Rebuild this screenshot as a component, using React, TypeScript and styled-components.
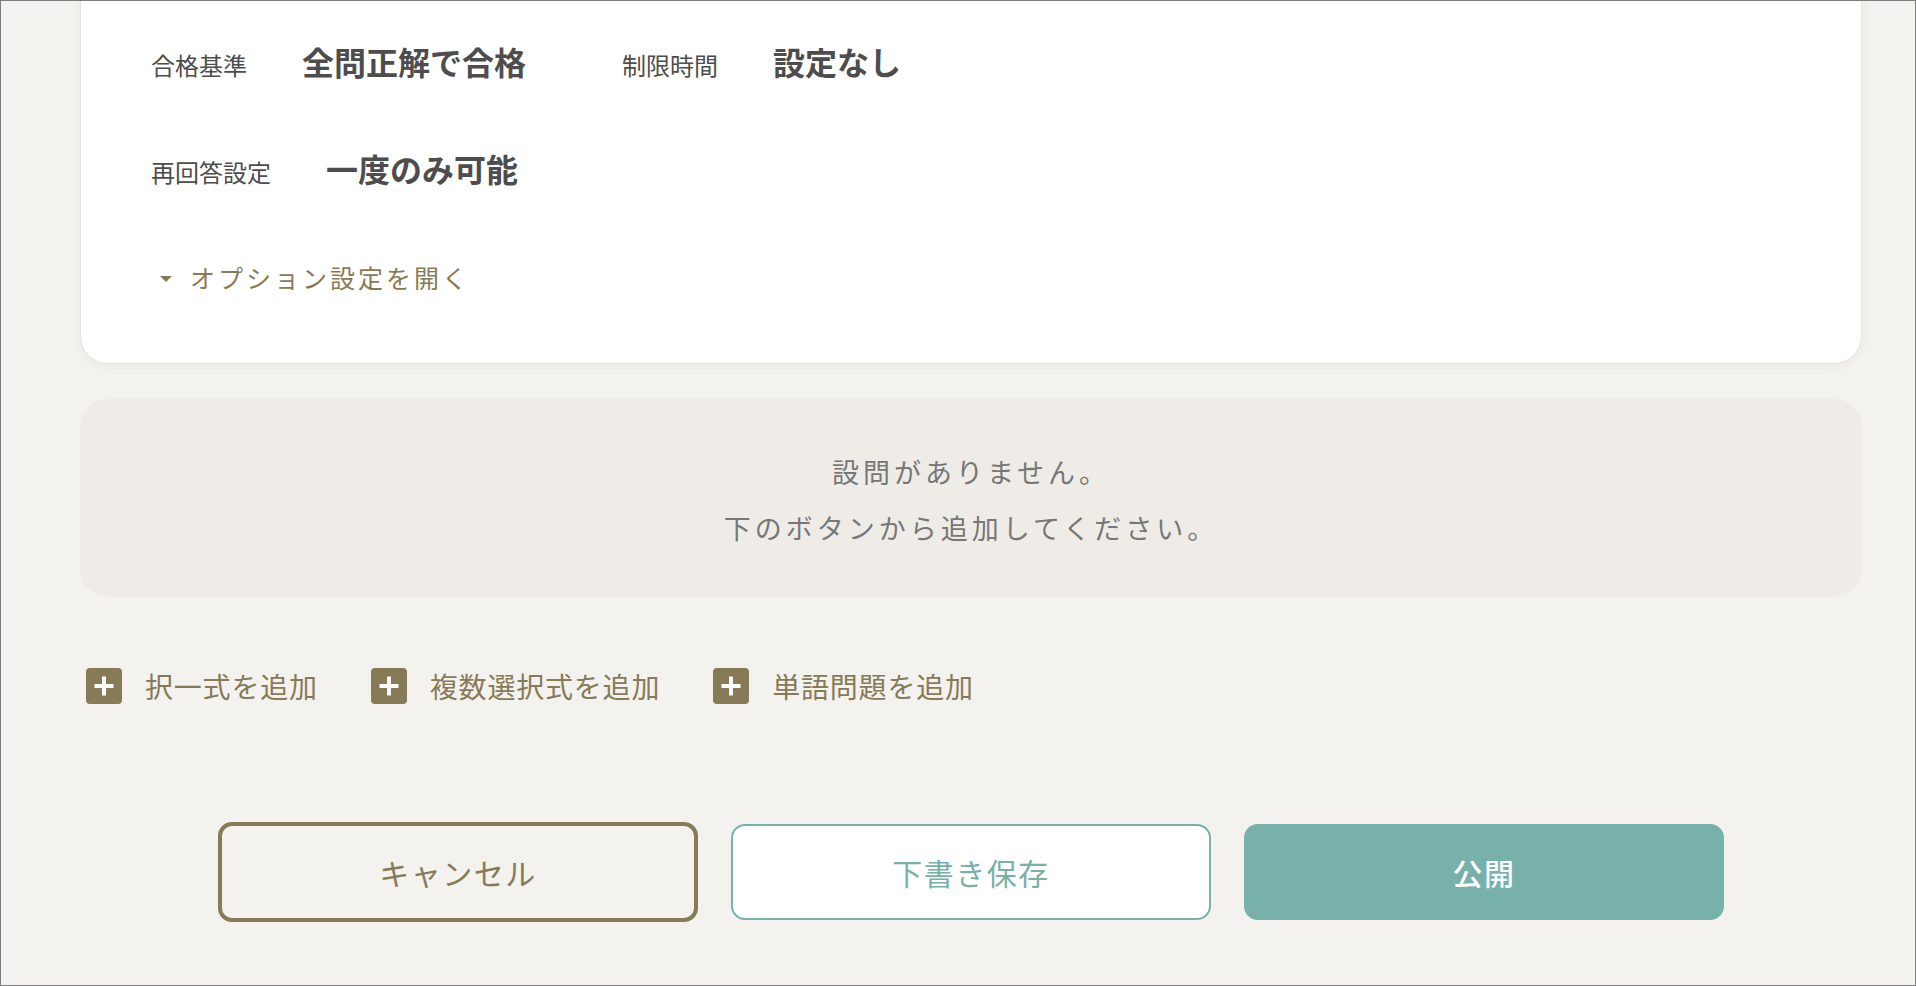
import React from "react";
import styled, { createGlobalStyle } from "styled-components";

const olive = "#877a56";
const teal = "#78b0aa";

const GlobalStyle = createGlobalStyle`
  html, body {
    margin: 0;
    padding: 0;
    background: #f3f2ee;
  }
  body {
    font-family: "Noto Sans CJK JP", "Noto Sans", sans-serif;
    color: #4a4a4a;
  }
  * {
    box-sizing: border-box;
  }
`;

interface Setting {
  label: string;
  value: string;
}

const settingRows: Setting[][] = [
  [
    { label: "合格基準", value: "全問正解で合格" },
    { label: "制限時間", value: "設定なし" },
  ],
  [{ label: "再回答設定", value: "一度のみ可能" }],
];

const addActions = ["択一式を追加", "複数選択式を追加", "単語問題を追加"];

const PlusIcon: React.FC = () => (
  <svg width="36" height="36" viewBox="0 0 36 36">
    <rect width="36" height="36" rx="4" fill={olive} />
    <path
      d="M18 8.5v19M8.5 18h19"
      stroke="#fff"
      strokeWidth="4"
      strokeLinecap="butt"
    />
  </svg>
);

export default function App() {
  return (
    <>
      <GlobalStyle />
      <Page>
        <SettingsCard>
          {settingRows.map((row, i) => (
            <SettingsRow key={i}>
              {row.map((s) => (
                <SettingItem key={s.label}>
                  <SettingLabel>{s.label}</SettingLabel>
                  <SettingValue>{s.value}</SettingValue>
                </SettingItem>
              ))}
            </SettingsRow>
          ))}
          <OptionToggle type="button">
            <Caret />
            オプション設定を開く
          </OptionToggle>
        </SettingsCard>

        <EmptyBox>
          <p>設問がありません。</p>
          <p>下のボタンから追加してください。</p>
        </EmptyBox>

        <AddRow>
          {addActions.map((label) => (
            <AddButton key={label} type="button">
              <PlusIcon />
              {label}
            </AddButton>
          ))}
        </AddRow>

        <FooterRow>
          <FooterButton $variant="cancel">キャンセル</FooterButton>
          <FooterButton $variant="draft">下書き保存</FooterButton>
          <FooterButton $variant="publish">公開</FooterButton>
        </FooterRow>
      </Page>
    </>
  );
}

const Page = styled.div`
  height: 100vh;
  overflow: hidden;
  border: 1px solid #7d7d7d;
  padding: 0 53px 0 79px;
  display: flex;
  flex-direction: column;
`;

const SettingsCard = styled.section`
  margin-top: -31px;
  background: #fff;
  border: 1px solid #e6e4df;
  border-radius: 28px;
  box-shadow: 0 2px 10px rgba(120, 110, 90, 0.08);
  padding: 70px 70px 66px;
  display: flex;
  flex-direction: column;
  gap: 67px;
`;

const SettingsRow = styled.div`
  display: flex;
  align-items: baseline;
  gap: 96px;
  height: 40px;
`;

const SettingItem = styled.div`
  display: flex;
  align-items: baseline;
  gap: 55px;
`;

const SettingLabel = styled.span`
  font-size: 24px;
  color: #4d4d4d;
  line-height: 40px;
`;

const SettingValue = styled.span`
  font-size: 32px;
  font-weight: 700;
  color: #4d4d4d;
  line-height: 40px;
`;

const OptionToggle = styled.button`
  align-self: flex-start;
  display: flex;
  align-items: center;
  gap: 18px;
  height: 40px;
  margin-top: 2px;
  margin-left: 9px;
  padding: 0;
  border: none;
  background: none;
  font-family: inherit;
  font-size: 25px;
  letter-spacing: 3px;
  color: ${olive};
  cursor: pointer;
`;

const Caret = styled.span`
  width: 0;
  height: 0;
  margin-top: 4px;
  border-left: 6px solid transparent;
  border-right: 6px solid transparent;
  border-top: 6px solid ${olive};
`;

const EmptyBox = styled.div`
  margin-top: 35px;
  height: 198px;
  background: #efece8;
  border-radius: 28px;
  padding-top: 45px;
  text-align: center;
  color: #777;
  font-size: 27px;
  letter-spacing: 4px;

  p {
    margin: 0;
    line-height: 56px;
  }
`;

const AddRow = styled.div`
  margin-top: 71px;
  margin-left: 6px;
  display: flex;
  align-items: center;
  gap: 53px;
`;

const AddButton = styled.button`
  display: flex;
  align-items: center;
  gap: 23px;
  padding: 0;
  border: none;
  background: none;
  font-family: inherit;
  font-size: 28px;
  letter-spacing: 0.8px;
  color: ${olive};
  cursor: pointer;
  height: 36px;
`;

const FooterRow = styled.div`
  margin-top: 118px;
  display: flex;
  justify-content: center;
  align-items: center;
  gap: 33px;
  height: 100px;
`;

type Variant = "cancel" | "draft" | "publish";

const variantStyles: Record<Variant, string> = {
  cancel: `
    height: 100px;
    border: 4px solid ${olive};
    background: transparent;
    color: ${olive};
  `,
  draft: `
    height: 96px;
    border: 2px solid ${teal};
    background: #fff;
    color: ${teal};
  `,
  publish: `
    height: 96px;
    border: none;
    background: ${teal};
    color: #fff;
    font-weight: 500;
  `,
};

const FooterButton = styled.button<{ $variant: Variant }>`
  width: 480px;
  border-radius: 14px;
  font-family: inherit;
  font-size: 30px;
  font-weight: 400;
  letter-spacing: 0.05em;
  cursor: pointer;
  ${({ $variant }) => variantStyles[$variant]}
`;
